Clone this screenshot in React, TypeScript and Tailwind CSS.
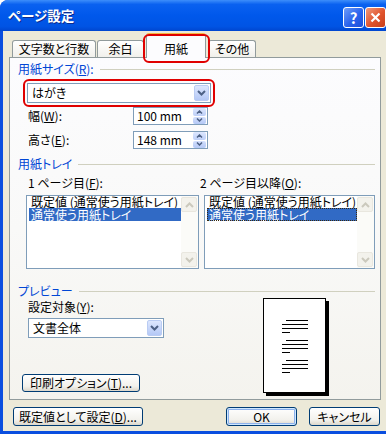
import React from 'react';

const Chevron = ({ color = '#4D6185', up = false }: { color?: string; up?: boolean }) => (
  <svg width="9" height="6" viewBox="0 0 9 6">
    <polyline
      points={up ? '1,5 4.5,1.5 8,5' : '1,1 4.5,4.5 8,1'}
      fill="none"
      stroke={color}
      strokeWidth="2"
    />
  </svg>
);

const Tiny = ({ up = false }: { up?: boolean }) => (
  <svg width="7" height="4" viewBox="0 0 7 4">
    <polyline points={up ? '1,3.5 3.5,1 6,3.5' : '1,0.5 3.5,3 6,0.5'} fill="none" stroke="#4D6185" strokeWidth="1.5" />
  </svg>
);

function Combo({ value, className }: { value: string; className: string }) {
  return (
    <div className={`flex h-[20px] items-center border border-[#7F9DB9] bg-white ${className}`}>
      <span className="flex-1 pl-[4px] text-[12px] leading-none text-black">{value}</span>
      <div className="mr-px flex h-[16px] w-[15px] items-center justify-center rounded-[2px] border border-[#BACCF3] bg-[linear-gradient(to_bottom,#DDE7FE,#B4C8F6)]">
        <Chevron />
      </div>
    </div>
  );
}

function Spin({ value }: { value: string }) {
  return (
    <div className="flex h-[18px] w-[75px] items-center border border-[#7F9DB9] bg-white">
      <span className="flex-1 pl-[3px] text-[12px] leading-none">{value}</span>
      <div className="mr-px flex h-[16px] w-[13px] flex-col gap-px">
        <div className="flex flex-1 items-center justify-center rounded-[2px] bg-[linear-gradient(to_bottom,#DDE7FE,#BDCFF8)]">
          <Tiny up />
        </div>
        <div className="flex flex-1 items-center justify-center rounded-[2px] bg-[linear-gradient(to_bottom,#D3DFFC,#B4C8F6)]">
          <Tiny />
        </div>
      </div>
    </div>
  );
}

function ScrollBtn({ up = false }: { up?: boolean }) {
  return (
    <div className="flex h-[15px] w-[16px] items-center justify-center rounded-[2px] border border-[#E9E7DF] bg-[#F3F2EC]">
      <Chevron color="#CBC9BD" up={up} />
    </div>
  );
}

function TrayList({ focus = false, className }: { focus?: boolean; className: string }) {
  return (
    <div className={`flex h-[74px] border border-[#7F9DB9] bg-white ${className}`}>
      <div className="flex flex-1 flex-col pl-[2px] text-[12px]">
        <div className="h-[12px] pl-[2px] leading-[12px] text-black">既定値 (通常使う用紙トレイ)</div>
        <div
          className={`h-[13px] bg-[#316AC5] pl-[2px] leading-[13px] text-white ${
            focus ? 'outline-1 -outline-offset-1 outline-dotted outline-[#3A2A10]' : ''
          }`}
        >
          通常使う用紙トレイ
        </div>
      </div>
      <div className="flex w-[17px] flex-col justify-between bg-[#FBFBF8] py-px">
        <ScrollBtn up />
        <ScrollBtn />
      </div>
    </div>
  );
}

function XPButton({
  children,
  className,
  isDefault = false,
}: {
  children: React.ReactNode;
  className: string;
  isDefault?: boolean;
}) {
  return (
    <div
      className={`flex items-center justify-center rounded-[3px] border border-[#003C74] bg-[linear-gradient(to_bottom,#FFFFFF,#F2F1EC_70%,#DCD7CB)] text-[12px] leading-none text-black ${
        isDefault ? 'shadow-[inset_0_0_0_1px_#CEE7FF,inset_0_0_0_2px_#8DB2EC]' : ''
      } ${className}`}
    >
      {children}
    </div>
  );
}

function GroupHeader({ label, className }: { label: React.ReactNode; className: string }) {
  return (
    <div className={`mr-[5px] flex h-[14px] items-center pl-[8px] ${className}`}>
      <span className="text-[12px] leading-none text-[#0046D5]">{label}</span>
      <div className="ml-[6px] h-px flex-1 bg-[#D0D0BF]" />
    </div>
  );
}

function Line({ className }: { className: string }) {
  return <div className={`h-px bg-black ${className}`} />;
}

function LineGroup() {
  return (
    <div className="flex flex-col gap-[3px]">
      <Line className="ml-[4px] w-[22px]" />
      <Line className="w-[26px]" />
      <Line className="w-[26px]" />
      <Line className="w-[8px]" />
    </div>
  );
}

const Red = ({ className }: { className: string }) => (
  <div className={`pointer-events-none absolute rounded-[6px] border-2 border-[#E00000] ${className}`} />
);

export default function App() {
  return (
    <div className="flex h-[434px] w-[386px] flex-col overflow-hidden rounded-tl-[8px] bg-[#0A4EDF] font-['Noto_Sans_CJK_JP',sans-serif] [font-feature-settings:'palt']">
      {/* title bar */}
      <div className="flex h-[31px] items-center bg-[linear-gradient(to_bottom,#3D8EFB_0%,#0A61F0_14%,#0058EB_50%,#0054E4_85%,#0046CF_100%)] pl-[8px]">
        <span className="text-[13.5px] font-bold leading-none text-white [text-shadow:1px_1px_0_#0B2B8F]">ページ設定</span>
        <div className="ml-auto mt-[3px] flex gap-[1px]">
          <div className="flex h-[21px] w-[21px] items-center justify-center rounded-[3px] border border-white bg-[linear-gradient(135deg,#6E9DF9,#2A63EC_55%,#1D4FD8)] text-[15px] font-bold leading-none text-white">
            ?
          </div>
          <div className="flex h-[21px] w-[21px] items-center justify-center rounded-[3px] border border-white bg-[linear-gradient(135deg,#F09A7C,#E0532C_55%,#C8401C)]">
            <svg width="11" height="11" viewBox="0 0 11 11">
              <path d="M1.5 1.5 L9.5 9.5 M9.5 1.5 L1.5 9.5" stroke="white" strokeWidth="2.2" />
            </svg>
          </div>
        </div>
      </div>

      {/* body */}
      <div className="mb-[3px] ml-[3px] flex flex-1 flex-col bg-[#ECE9D8]">
        {/* tabs */}
        <div className="mt-[2px] flex h-[24px] items-end pl-[9px] text-[12px]">
          <div className="flex h-[17px] w-[84px] items-center justify-center rounded-t-[3px] border border-b-0 border-[#919B9C] bg-[linear-gradient(to_bottom,#FFFFFF,#F1F0EB)] leading-none">
            文字数と行数
          </div>
          <div className="ml-px flex h-[17px] w-[47px] items-center justify-center rounded-t-[3px] border border-b-0 border-[#919B9C] bg-[linear-gradient(to_bottom,#FFFFFF,#F1F0EB)] leading-none">
            余白
          </div>
          <div className="relative z-10 -mb-px ml-[2px] flex h-[25px] w-[60px] items-center justify-center rounded-t-[3px] border border-b-0 border-t-[3px] border-[#919B9C] border-t-[#F7B53F] bg-[#FCFCFE] pt-[3px] leading-none">
            用紙
            <Red className="-bottom-[5px] -left-[4px] -right-[5px] -top-[2px]" />
          </div>
          <div className="ml-[2px] flex h-[17px] w-[48px] items-center justify-center rounded-t-[3px] border border-b-0 border-[#919B9C] bg-[linear-gradient(to_bottom,#FFFFFF,#F1F0EB)] leading-none">
            その他
          </div>
        </div>

        {/* panel */}
        <div className="ml-[6px] flex h-[343px] w-[372px] flex-col border border-[#919B9C] bg-[linear-gradient(to_bottom,#FCFCFE,#F9F9F8_50%,#F4F3EE)] text-[12px] text-black">
          <GroupHeader
            className="mt-[4px]"
            label={
              <>
                用紙サイズ(<u>R</u>):
              </>
            }
          />
          <div className="relative ml-[17px] mt-[7px] w-[184px]">
            <Combo value="はがき" className="w-[184px]" />
            <Red className="-bottom-[4px] -left-[4px] -right-[4px] -top-[4px]" />
          </div>

          <div className="mt-[4px] flex items-center pl-[18px]">
            <span className="w-[105px] leading-none">
              幅(<u>W</u>):
            </span>
            <Spin value="100 mm" />
          </div>
          <div className="mt-[6px] flex items-center pl-[18px]">
            <span className="w-[105px] leading-none">
              高さ(<u>E</u>):
            </span>
            <Spin value="148 mm" />
          </div>

          <GroupHeader className="mt-[8px]" label="用紙トレイ" />
          <div className="mt-[5px] flex h-[14px] items-center pl-[18px] leading-none">
            <span className="w-[172px]">
              1 ページ目(<u>F</u>):
            </span>
            <span>
              2 ページ目以降(<u>O</u>):
            </span>
          </div>
          <div className="mt-[5px] flex gap-[5px] pl-[16px]">
            <TrayList className="w-[173px]" />
            <TrayList className="w-[171px]" focus />
          </div>

          <GroupHeader className="mt-[15px]" label="プレビュー" />
          <div className="flex">
            <div className="flex w-[253px] flex-col pl-[12px]">
              <span className="ml-[6px] mt-[2px] h-[14px] leading-[14px]">
                設定対象(<u>Y</u>):
              </span>
              <Combo value="文書全体" className="ml-[6px] mt-[4px] w-[136px]" />
              <XPButton className="mt-[36px] h-[18px] w-[118px]">
                印刷オプション(<u>T</u>)...
              </XPButton>
            </div>
            <div className="flex h-[95px] w-[63px] flex-col gap-[7px] border border-black bg-white pl-[18px] pt-[21px] shadow-[3px_3px_0_#000]">
              <LineGroup />
              <LineGroup />
              <LineGroup />
            </div>
          </div>
        </div>

        {/* bottom buttons */}
        <div className="mt-[7px] flex pl-[10px]">
          <XPButton className="h-[19px] w-[130px]">
            既定値として設定(<u>D</u>)...
          </XPButton>
          <XPButton isDefault className="ml-[83px] h-[19px] w-[71px]">
            OK
          </XPButton>
          <XPButton className="ml-[12px] h-[19px] w-[71px]">キャンセル</XPButton>
        </div>
      </div>
    </div>
  );
}
